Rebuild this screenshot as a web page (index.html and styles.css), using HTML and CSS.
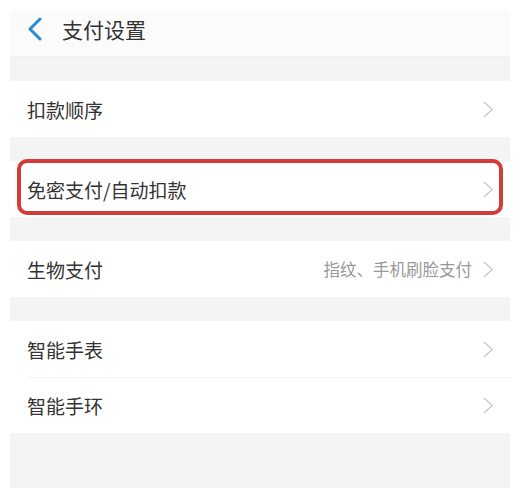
FILE: index.html
```html
<!DOCTYPE html>
<html lang="zh-CN">
<head>
    <meta charset="UTF-8">
    <title>支付设置</title>
    <link rel="stylesheet" href="styles.css">
</head>
<body>
    <div class="screen">
        <div class="top-bar">
            <svg class="back-icon" width="16" height="24" viewBox="0 0 16 24">
                <polyline points="13,2 3,12 13,22" fill="none" stroke="#2a8ad4" stroke-width="3" stroke-linecap="round" stroke-linejoin="round"/>
            </svg>
            <span class="title">支付设置</span>
        </div>

        <div class="gap"></div>
        <div class="row">
            <span class="label">扣款顺序</span>
            <svg class="arrow" width="10" height="17" viewBox="0 0 10 17"><polyline points="1,1 9,8.5 1,16" fill="none" stroke="#c8c8c8" stroke-width="1.3"/></svg>
        </div>

        <div class="gap"></div>
        <div class="row marked">
            <span class="label">免密支付/自动扣款</span>
            <svg class="arrow" width="10" height="17" viewBox="0 0 10 17"><polyline points="1,1 9,8.5 1,16" fill="none" stroke="#c8c8c8" stroke-width="1.3"/></svg>
            <div class="highlight"></div>
        </div>

        <div class="gap"></div>
        <div class="row">
            <span class="label">生物支付</span>
            <span class="value">指纹、手机刷脸支付</span>
            <svg class="arrow" width="10" height="17" viewBox="0 0 10 17"><polyline points="1,1 9,8.5 1,16" fill="none" stroke="#c8c8c8" stroke-width="1.3"/></svg>
        </div>

        <div class="gap"></div>
        <div class="row">
            <span class="label">智能手表</span>
            <svg class="arrow" width="10" height="17" viewBox="0 0 10 17"><polyline points="1,1 9,8.5 1,16" fill="none" stroke="#c8c8c8" stroke-width="1.3"/></svg>
        </div>
        <div class="row divided">
            <span class="label">智能手环</span>
            <svg class="arrow" width="10" height="17" viewBox="0 0 10 17"><polyline points="1,1 9,8.5 1,16" fill="none" stroke="#c8c8c8" stroke-width="1.3"/></svg>
        </div>

        <div class="bottom"></div>
    </div>
</body>
</html>
```

FILE: styles.css
```css
body {
    margin: 0;
    background-color: #fff;
    font-family: "Noto Sans CJK SC", "Noto Sans", sans-serif;
    color: #333;
}
.screen {
    margin: 10px 13px 1px 10px;
    height: 478px;
    display: flex;
    flex-direction: column;
    background-color: #f4f4f4;
}
.top-bar {
    height: 37px;
    padding-bottom: 9px;
    display: flex;
    align-items: center;
    background-color: #fbfbfb;
    border-bottom: 1px solid #efefef;
}
.back-icon {
    margin-left: 17px;
}
.title {
    margin-left: 19px;
    font-size: 21px;
    color: #333;
}
.gap {
    height: 24px;
}
.row {
    position: relative;
    height: 56px;
    display: flex;
    align-items: center;
    padding: 0 17px;
    background-color: #fff;
}
.row.divided::before {
    content: "";
    position: absolute;
    top: 0;
    left: 17px;
    right: 0;
    border-top: 1px solid #f2f2f2;
}
.label {
    flex: 1;
    font-size: 19px;
    color: #333;
}
.value {
    font-size: 16.5px;
    color: #999;
    margin-right: 11px;
}
.highlight {
    position: absolute;
    left: 7px;
    right: 7px;
    top: -2px;
    bottom: 2px;
    border: 4px solid #d43c37;
    border-radius: 10px;
}
.bottom {
    flex: 1;
}
```
